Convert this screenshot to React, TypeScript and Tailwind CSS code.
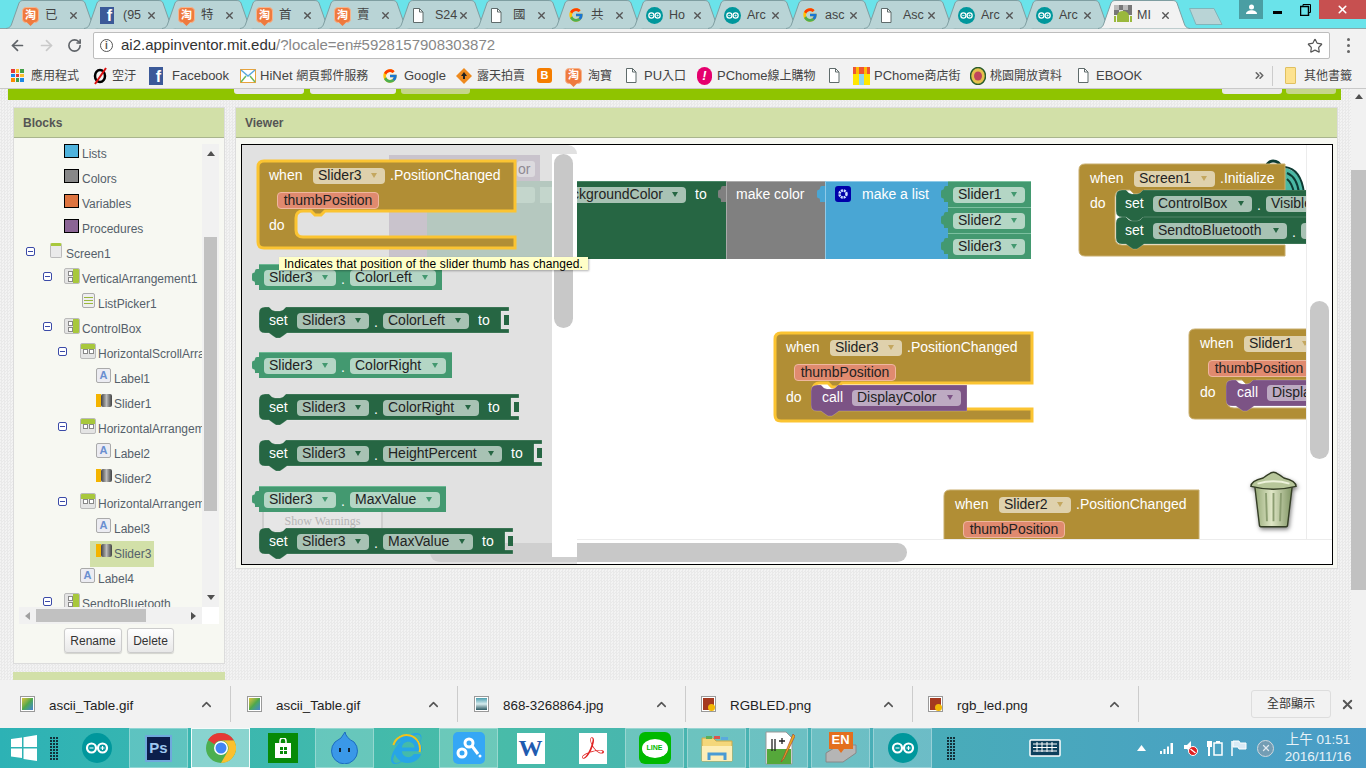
import React from "react";
import { ArrowLeft, ArrowRight, RotateCw, Star, X, ChevronUp, ChevronsRight } from "lucide-react";
import { FcGoogle } from "react-icons/fc";
import { FaInternetExplorer } from "react-icons/fa";
import { SiAdobeacrobatreader } from "react-icons/si";

const Taobao = () => (
  <span className="relative flex h-[16px] w-[17px] items-center justify-center rounded-[4px] border border-[#f6b48c] bg-[#ef7a3e] text-[11px] font-bold leading-none text-white">
    淘
    <span className="absolute -bottom-[3px] left-[5px] h-[5px] w-[5px] rotate-45 bg-[#ef7a3e]" />
  </span>
);
const Fb = ({ s = "h-[18px] w-[14px]" }: { s?: string }) => (
  <span className={`flex items-end justify-end bg-[#3b5998] pr-[2px] text-[16px] font-bold leading-[16px] text-white ${s}`}>f</span>
);
const Doc = () => (
  <svg width="12" height="15" viewBox="0 0 12 15" className="shrink-0">
    <path d="M1.5.5h6l3.5 3.5v10.5h-9.500z" fill="#fff" stroke="#5f6b6b" />
    <path d="M7.500.5v3.500h3.500" fill="none" stroke="#5f6b6b" />
  </svg>
);
const Arduino = ({ size = 17 }: { size?: number }) => (
  <svg width={size} height={size} viewBox="0 0 30 30" className="shrink-0">
    <circle cx="15" cy="15" r="15" fill="#00979c" />
    <circle cx="9.500" cy="15" r="4.500" fill="none" stroke="#fff" strokeWidth="2.200" />
    <circle cx="20.500" cy="15" r="4.500" fill="none" stroke="#fff" strokeWidth="2.200" />
    <path d="M7.500 15h4M18.500 15h4M20.500 13v4" stroke="#fff" strokeWidth="1.200" />
  </svg>
);
const Android = () => (
  <svg width="18" height="20" viewBox="0 0 18 20" className="shrink-0">
    <rect width="18" height="10" fill="#777" />
    <rect x="0" y="0" width="5" height="5" fill="#bbb" />
    <rect x="9" y="0" width="5" height="5" fill="#bbb" />
    <rect x="5" y="5" width="4" height="5" fill="#ddd" />
    <path d="M3 11a6 5 0 0 1 12 0v6H3z" fill="#9ab83d" />
    <rect x="0" y="11" width="2" height="6" fill="#9ab83d" />
    <rect x="16" y="11" width="2" height="6" fill="#9ab83d" />
  </svg>
);

const TAB_ICON: Record<string, React.ReactNode> = {
  t: <Taobao />,
  f: <Fb s="h-[17px] w-[14px]" />,
  d: <Doc />,
  g: <FcGoogle size={16} />,
  a: <Arduino />,
  m: <Android />,
};
const TABS = [
  ["t", "已"], ["f", "(95"], ["t", "特"], ["t", "首"], ["t", "賣"], ["d", "S24"], ["d", "國"], ["g", "共"],
  ["a", "Ho"], ["a", "Arc"], ["g", "asc"], ["d", "Asc"], ["a", "Arc"], ["a", "Arc"], ["m", "MI"],
];

function Tab({ icon, title, active }: { icon: string; title: string; active?: boolean }) {
  return (
    <div className={`relative -mr-[14px] h-[28px] w-[92px] shrink-0 ${active ? "z-10" : ""}`}>
      <svg width="92" height="29" className="absolute left-0 top-0">
        <path
          d="M0 28.500C4 28 5 26 6 23L13 3C14 1 15 .5 18 .5H74C77 .5 78 1 79 3L86 23C87 26 88 28 92 28.500"
          fill={active ? "#f2f2f2" : "#b9d4d6"}
          stroke="#7f9ea1"
        />
      </svg>
      <div className="relative flex h-full items-center pl-[16px] pt-[2px]">
        <span className="flex w-[23px] shrink-0">{TAB_ICON[icon]}</span>
        <span className="w-[23px] whitespace-nowrap text-[12.5px] text-[#444]">{title}</span>
        <X size={11} strokeWidth={3} className="shrink-0 text-[#555]" />
      </div>
    </div>
  );
}

function TabStrip() {
  return (
    <div className="flex h-[28px] shrink-0 bg-[#6ae3ea] pl-[6px]">
      {TABS.map((t, i) => (
        <Tab key={i} icon={t[0]} title={t[1]} active={i === 14} />
      ))}
      <svg width="36" height="20" className="ml-[12px] mt-[7px] shrink-0">
        <path d="M1.500 1.500H26L34 17.500H8z" fill="#b9d4d6" stroke="#7fb5ba" strokeLinejoin="round" />
      </svg>
      <div className="ml-[15px] flex h-[19px] w-[25px] items-center justify-center bg-[#4a9ea3]">
        <svg width="11" height="11" viewBox="0 0 11 11"><circle cx="5.500" cy="3" r="2.500" fill="#fff" /><path d="M0 10c0-5 11-5 11 0z" fill="#fff" /></svg>
      </div>
      <div className="flex h-[19px] w-[29px] items-center justify-center text-black"><div className="mt-[5px] h-[3px] w-[9px] bg-black" /></div>
      <div className="flex h-[19px] w-[28px] items-center justify-center">
        <svg width="11" height="12" viewBox="0 0 11 12"><path d="M3 2.500V.500h7.500v8H8.500" fill="none" stroke="#000" /><rect x=".5" y="2.500" width="8" height="9" fill="none" stroke="#000" strokeWidth="1.500" /></svg>
      </div>
      <div className="flex h-[19px] w-[48px] items-center justify-center bg-[#c75050]"><X size={13} strokeWidth={3} className="text-white" /></div>
    </div>
  );
}

function Toolbar() {
  return (
    <div className="flex h-[34px] shrink-0 items-center border-t border-[#8aa6a8] bg-[#f2f2f2] pl-[9px]">
      <ArrowLeft size={17} strokeWidth={2.4} className="text-[#5f6368]" />
      <ArrowRight size={17} strokeWidth={2.4} className="ml-[12px] text-[#c9c9c9]" />
      <RotateCw size={15} strokeWidth={2.6} className="ml-[12px] text-[#5f6368]" />
      <div className="ml-[11px] flex h-[27px] w-[1237px] items-center rounded-[2px] border border-[#bdbdbd] bg-white pl-[6px] pr-[6px]">
        <span className="flex h-[13px] w-[13px] items-center justify-center rounded-full border-[1.5px] border-[#555] text-[10px] font-bold leading-none text-[#555]">i</span>
        <span className="ml-[8px] text-[15px] text-[#333]">ai2.appinventor.mit.edu<span className="text-[#888]">/?locale=en#5928157908303872</span></span>
        <Star size={16} strokeWidth={1.8} className="ml-auto text-[#555]" />
      </div>
      <div className="ml-[17px] flex flex-col gap-[3px]">
        <span className="h-[3px] w-[3px] rounded-full bg-[#666]" />
        <span className="h-[3px] w-[3px] rounded-full bg-[#666]" />
        <span className="h-[3px] w-[3px] rounded-full bg-[#666]" />
      </div>
    </div>
  );
}

const APP_COLORS = ["bg-[#e53935]", "bg-[#fbc02d]", "bg-[#43a047]", "bg-[#1e88e5]", "bg-[#e53935]", "bg-[#fbc02d]", "bg-[#fb8c00]", "bg-[#43a047]", "bg-[#1e88e5]"];

function BM({ w, icon, children }: { w: string; icon: React.ReactNode; children?: React.ReactNode }) {
  return (
    <div className={`flex shrink-0 items-center ${w}`}>
      <span className="flex shrink-0">{icon}</span>
      <span className="ml-[4px] whitespace-nowrap text-[13px] text-[#444]">{children}</span>
    </div>
  );
}
const Cjk = ({ children }: { children: React.ReactNode }) => <span className="text-[12px]">{children}</span>;

function Bookmarks() {
  return (
    <div className="flex h-[27px] shrink-0 items-center border-b border-[#c9c9c9] bg-[#f2f2f2] pl-[11px] pt-[1px]">
      <BM w="w-[81px]" icon={<span className="mr-[3px] grid h-[13px] w-[13px] grid-cols-3 gap-[1px]">{APP_COLORS.map((c, i) => <span key={i} className={c} />)}</span>}><Cjk>應用程式</Cjk></BM>
      <BM w="w-[57px]" icon={<svg width="16" height="18" viewBox="0 0 16 18"><ellipse cx="8" cy="9" rx="5" ry="6" fill="none" stroke="#000" strokeWidth="2.500" /><path d="M14 1L3 17" stroke="#d11" strokeWidth="2" /></svg>}><Cjk>空汙</Cjk></BM>
      <BM w="w-[91px]" icon={<Fb />}><span className="ml-[5px]">Facebook</span></BM>
      <BM w="w-[142px]" icon={<svg width="16" height="14" viewBox="0 0 16 14"><rect x=".5" y=".5" width="15" height="13" fill="#fff" stroke="#e8a33c" /><path d="M1 1l7 6 7-6" fill="none" stroke="#5aa9dd" strokeWidth="1.500" /><path d="M1 13l5-6M15 13l-5-6" stroke="#6dba5e" strokeWidth="1.500" /></svg>}>HiNet <Cjk>網頁郵件服務</Cjk></BM>
      <BM w="w-[74px]" icon={<FcGoogle size={16} />}><span className="ml-[2px]">Google</span></BM>
      <BM w="w-[81px]" icon={<svg width="16" height="18" viewBox="0 0 16 18"><path d="M8 1l8 8-8 8-8-8z" fill="#ee8a1e" /><path d="M8 5l3 4h-2v3H7V9H5z" fill="#222" /></svg>}><span className="ml-[1px]"><Cjk>露天拍賣</Cjk></span></BM>
      <BM w="w-[28px]" icon={<span className="flex h-[15px] w-[15px] items-center justify-center rounded-[3px] bg-[#f57d00] text-[11px] font-bold text-white">B</span>} />
      <BM w="w-[60px]" icon={<Taobao />}><span className="ml-[2px]"><Cjk>淘寶</Cjk></span></BM>
      <BM w="w-[72px]" icon={<Doc />}><span className="ml-[3px]">PU<Cjk>入口</Cjk></span></BM>
      <BM w="w-[131px]" icon={<span className="flex h-[18px] w-[15px] items-center justify-center rounded-full bg-[#e5006d] text-[13px] font-bold italic leading-none text-white">!</span>}><span className="ml-[1px]">PChome<Cjk>線上購物</Cjk></span></BM>
      <BM w="w-[25px]" icon={<Doc />} />
      <BM w="w-[117px]" icon={<svg width="17" height="18" viewBox="0 0 17 18"><rect width="17" height="7" fill="#e53" /><rect y="7" width="6" height="11" fill="#ffe600" /><rect x="6" y="7" width="5" height="11" fill="#8fd6ee" /><rect x="11" y="7" width="6" height="11" fill="#ffe600" /><rect x="3" width="3" height="7" fill="#fb0" /><rect x="11" width="3" height="7" fill="#fb0" /></svg>}>PChome<Cjk>商店街</Cjk></BM>
      <BM w="w-[107px]" icon={<svg width="16" height="18" viewBox="0 0 16 18"><ellipse cx="8" cy="9" rx="7.500" ry="8.500" fill="#e4c24c" stroke="#2b5e2b" strokeWidth="1.500" /><ellipse cx="8" cy="9" rx="4" ry="4.500" fill="#c0455c" /></svg>}><Cjk>桃園開放資料</Cjk></BM>
      <BM w="w-[176px]" icon={<Doc />}><span className="ml-[3px]">EBOOK</span></BM>
      <ChevronsRight size={13} strokeWidth={3} className="text-[#666]" />
      <div className="ml-[6px] h-[20px] w-px bg-[#ccc]" />
      <span className="ml-[12px] h-[17px] w-[11px] rounded-[1px] border border-[#e0c060] bg-[#fde28f]" />
      <span className="ml-[8px] whitespace-nowrap text-[12px] text-[#444]">其他書籤</span>
    </div>
  );
}

/* tree */
const MinusBox = () => (
  <span className="flex h-[9px] w-[9px] shrink-0 -translate-y-[2px] items-center justify-center rounded-[2px] border border-[#3b4aa8] bg-white">
    <span className="h-px w-[5px] bg-[#3b4aa8]" />
  </span>
);
const Sq = ({ c }: { c: string }) => <span className={`block h-[14px] w-[15px] border border-black ${c}`} />;
const ArrIcon = ({ dir }: { dir: "v" | "h" }) => (
  <span className="relative block h-[16px] w-[16px] rounded-[2px] border border-[#bbb] bg-[#e4e4e4]">
    {dir === "v" && <span className="absolute right-0 top-0 h-full w-[6px] rounded-r-[1px] bg-[#a8c83c]" />}
    {dir === "h" && <span className="absolute left-0 top-0 h-[5px] w-full rounded-t-[1px] bg-[#a8c83c]" />}
    <span className={`absolute h-[5px] w-[5px] border border-[#888] bg-white ${dir === "v" ? "left-[3px] top-[2px]" : "left-[2px] top-[5px]"}`} />
    <span className={`absolute h-[5px] w-[5px] border border-[#888] bg-white ${dir === "v" ? "left-[3px] top-[8px]" : "left-[8px] top-[5px]"}`} />
  </span>
);
const LabelIcon = () => (
  <span className="flex h-[15px] w-[15px] items-center justify-center rounded-[2px] border border-[#aaa] bg-[#ececf2] text-[11px] font-bold leading-none text-[#6a8fd0]">A</span>
);
const SliderIcon = () => (
  <span className="flex h-[13px] w-[16px]">
    <span className="h-full w-[5px] bg-[#f4b400]" />
    <span className="h-full w-[11px] rounded-[2px] bg-gradient-to-r from-[#444] via-[#bbb] to-[#444]" />
  </span>
);
const ListIcon = () => (
  <span className="flex h-[15px] w-[13px] flex-col justify-center gap-[2px] rounded-[2px] border border-[#aaa] bg-[#eee] pl-[1px]">
    <span className="h-px w-[9px] bg-[#9ab83d]" /><span className="h-px w-[9px] bg-[#9ab83d]" /><span className="h-px w-[9px] bg-[#9ab83d]" />
  </span>
);
const ScreenIcon = () => (
  <span className="block h-[15px] w-[12px] rounded-[2px] border border-[#bbb] border-t-[3px] border-t-[#a8c83c] bg-[#eaeaea]" />
);

type Row = { p: string; minus?: boolean; iconM: string; icon: React.ReactNode; text: string; sel?: boolean };
const ROWS: Row[] = [
  { p: "pl-[45px]", iconM: "mr-[3px]", icon: <Sq c="bg-[#4fb3dd]" />, text: "Lists" },
  { p: "pl-[45px]", iconM: "mr-[3px]", icon: <Sq c="bg-[#888888]" />, text: "Colors" },
  { p: "pl-[45px]", iconM: "mr-[3px]", icon: <Sq c="bg-[#de743f]" />, text: "Variables" },
  { p: "pl-[45px]", iconM: "mr-[3px]", icon: <Sq c="bg-[#8b6595]" />, text: "Procedures" },
  { p: "pl-[7px]", minus: true, iconM: "ml-[15px] mr-[4px]", icon: <ScreenIcon />, text: "Screen1" },
  { p: "pl-[24px]", minus: true, iconM: "ml-[12px] mr-[2px]", icon: <ArrIcon dir="v" />, text: "VerticalArrangement1" },
  { p: "pl-[63px]", iconM: "mr-[3px]", icon: <ListIcon />, text: "ListPicker1" },
  { p: "pl-[24px]", minus: true, iconM: "ml-[12px] mr-[2px]", icon: <ArrIcon dir="v" />, text: "ControlBox" },
  { p: "pl-[39px]", minus: true, iconM: "ml-[13px] mr-[2px]", icon: <ArrIcon dir="h" />, text: "HorizontalScrollArrangement1" },
  { p: "pl-[77px]", iconM: "mr-[3px]", icon: <LabelIcon />, text: "Label1" },
  { p: "pl-[77px]", iconM: "mr-[2px]", icon: <SliderIcon />, text: "Slider1" },
  { p: "pl-[39px]", minus: true, iconM: "ml-[13px] mr-[2px]", icon: <ArrIcon dir="h" />, text: "HorizontalArrangement1" },
  { p: "pl-[77px]", iconM: "mr-[3px]", icon: <LabelIcon />, text: "Label2" },
  { p: "pl-[77px]", iconM: "mr-[2px]", icon: <SliderIcon />, text: "Slider2" },
  { p: "pl-[39px]", minus: true, iconM: "ml-[13px] mr-[2px]", icon: <ArrIcon dir="h" />, text: "HorizontalArrangement2" },
  { p: "pl-[77px]", iconM: "mr-[3px]", icon: <LabelIcon />, text: "Label3" },
  { p: "pl-[71px]", iconM: "ml-[6px] mr-[2px]", icon: <SliderIcon />, text: "Slider3", sel: true },
  { p: "pl-[61px]", iconM: "mr-[3px]", icon: <LabelIcon />, text: "Label4" },
  { p: "pl-[24px]", minus: true, iconM: "ml-[12px] mr-[2px]", icon: <ArrIcon dir="v" />, text: "SendtoBluetooth" },
];

function BlocksPanel() {
  return (
    <div className="flex h-[557px] w-[212px] shrink-0 flex-col border border-[#dcdcdc] bg-[#f7f8f2]">
      <div className="flex h-[30px] shrink-0 items-center border-b border-[#a9b58d] bg-[#d2e0a8] pl-[9px] text-[12px] font-bold text-[#555]">Blocks</div>
      <div className="ml-[5px] mt-[6px] flex h-[480px] w-[200px] flex-col">
        <div className="flex h-[463px] w-[200px]">
          <div className="h-full w-[183px] overflow-hidden">
            <div className="-mt-[3px]">
              {ROWS.map((r, i) => (
                <div key={i} className={`flex h-[25px] w-[260px] items-center whitespace-nowrap text-[12px] text-[#55606a] ${r.p}`}>
                  {r.minus && <MinusBox />}
                  {r.sel ? (
                    <div className="flex h-[26px] items-center bg-[#d2e0a8] pr-[3px]">
                      <span className={`flex -translate-y-[3px] ${r.iconM}`}>{r.icon}</span>
                      <span className="pt-[1px]">{r.text}</span>
                    </div>
                  ) : (
                    <>
                      <span className={`flex -translate-y-[3px] ${r.iconM}`}>{r.icon}</span>
                      <span className="pt-[1px]">{r.text}</span>
                    </>
                  )}
                </div>
              ))}
            </div>
          </div>
          <div className="flex h-full w-[17px] flex-col items-center bg-[#f1f1f1]">
            <svg width="8" height="5" className="mt-[7px] shrink-0"><path d="M4 0l4 5H0z" fill="#505050" /></svg>
            <div className="mt-[81px] h-[274px] w-[13px] shrink-0 bg-[#c1c1c1]" />
            <svg width="8" height="5" className="mt-[84px] shrink-0"><path d="M4 5l4-5H0z" fill="#505050" /></svg>
          </div>
        </div>
        <div className="flex h-[17px] w-[200px]">
          <div className="flex h-full w-[183px] items-center bg-[#f1f1f1] pl-[6px]">
            <svg width="5" height="8" className="shrink-0"><path d="M0 4l5-4v8z" fill="#a0a0a0" /></svg>
            <div className="ml-[6px] h-[13px] w-[110px] bg-[#c1c1c1]" />
            <svg width="5" height="8" className="ml-[45px] shrink-0"><path d="M5 4L0 0v8z" fill="#505050" /></svg>
          </div>
          <div className="h-full w-[17px] bg-white" />
        </div>
      </div>
      <div className="mt-[4px] flex gap-[5px] pl-[50px]">
        <button className="h-[25px] w-[58px] rounded-[3px] border border-[#ccc] bg-gradient-to-b from-white to-[#e8e8e8] text-[12px] text-[#333] shadow-[0_1px_1px_rgba(0,0,0,0.15)]">Rename</button>
        <button className="h-[25px] w-[47px] rounded-[3px] border border-[#ccc] bg-gradient-to-b from-white to-[#e8e8e8] text-[12px] text-[#333] shadow-[0_1px_1px_rgba(0,0,0,0.15)]">Delete</button>
      </div>
    </div>
  );
}

/* blockly */
type Tone = "gold" | "dark" | "green" | "purple";
const TONE: Record<Tone, { bg: string; arrow: string }> = {
  gold: { bg: "bg-[#dfd1ac]", arrow: "#c4a75f" },
  dark: { bg: "bg-[#a8c2b4]", arrow: "#266643" },
  green: { bg: "bg-[#b4d6c5]", arrow: "#439970" },
  purple: { bg: "bg-[#bdaac2]", arrow: "#7c5385" },
};
function Pill({ tone, w, children }: { tone: Tone; w: string; children: React.ReactNode }) {
  return (
    <span className={`flex h-4 shrink-0 items-center justify-between overflow-hidden whitespace-nowrap rounded-[4px] pb-[2px] pl-[5px] pr-[8px] text-[14px] leading-none text-[#222] ${TONE[tone].bg} ${w}`}>
      {children}
      <svg width="6" height="5" className="ml-[3px] mt-[1px] shrink-0"><path d="M0 0h6L3 5z" fill={TONE[tone].arrow} /></svg>
    </span>
  );
}
const Dot = () => <span className="w-[14px] shrink-0 pt-[3px] text-center text-[14px] leading-none text-white">.</span>;
const BlockText = ({ children, m = "" }: { children: React.ReactNode; m?: string }) => (
  <span className={`shrink-0 -translate-y-px text-[14px] leading-none text-white ${m}`}>{children}</span>
);

function stmtPath(w: number, h: number, socket: boolean) {
  const right = socket ? `H${w}V4H${w - 8}V${h - 4}H${w}V${h}` : `H${w}V${h}`;
  return `M6 0H10l3 3 3 1h5l3-1 3-3${right}H28l-4 3-3 2h-4l-3-2-4-3H6Q0 ${h} 0 ${h - 6}V6Q0 0 6 0Z`;
}
function Stmt({ pos, w, h = 26, fill, socket, children }: { pos: string; w: number; h?: number; fill: string; socket?: boolean; children: React.ReactNode }) {
  return (
    <div className={`absolute ${pos}`}>
      <svg width={w} height={h + 6} className="absolute left-0 top-0">
        <path d={stmtPath(w, h, !!socket)} fill={fill} stroke="#ffffff33" strokeWidth="1" />
        {socket && <rect x={w - 5} y={8} width={5} height={h - 16} fill={fill} />}
      </svg>
      <div className="relative flex items-center pt-[5px]">{children}</div>
    </div>
  );
}
function SetB({ pos, w, prop, pw }: { pos: string; w: number; prop: string; pw: string }) {
  return (
    <Stmt pos={pos} w={w} fill="#266643" socket>
      <BlockText m="ml-[10px] w-[28px]">set</BlockText>
      <Pill tone="dark" w="w-[72px]">Slider3</Pill>
      <Dot />
      <Pill tone="dark" w={pw}>{prop}</Pill>
      <BlockText m="ml-[9px]">to</BlockText>
    </Stmt>
  );
}
const PuzzleTab = ({ c, cls }: { c: string; cls: string }) => (
  <svg width="8" height="16" className={`absolute ${cls}`}><path d="M8 0H5Q3 0 3 2Q3 4 1 4Q0 4 0 6V10Q0 12 1 12Q3 12 3 14V16H8Z" fill={c} /></svg>
);
function Getter({ pos, prop, pw, w }: { pos: string; prop: string; pw: string; w: string }) {
  return (
    <div className={`absolute flex h-[26px] items-center border-t border-[#6cb893] bg-[#439970] pl-[5px] ${pos} ${w}`}>
      <PuzzleTab c="#439970" cls="-left-[7px] top-[4px]" />
      <Pill tone="green" w="w-[72px]">Slider3</Pill>
      <Dot />
      <Pill tone="green" w={pw}>{prop}</Pill>
    </div>
  );
}
function eventPath(w: number, t: number, l: number, b: number, bottom: number) {
  return `M6 0H${w}V${t}H${l + 29}l-4 4h-6l-4-4H${l + 7}Q${l} ${t} ${l} ${t + 7}V${b - 7}Q${l} ${b} ${l + 7} ${b}H${w}V${bottom}H6Q0 ${bottom} 0 ${bottom - 6}V6Q0 0 6 0Z`;
}
function EventB({ pos, w, t, l, b, bottom, sel, comp, event, doTop, param, children }: {
  pos: string; w: number; t: number; l: number; b: number; bottom: number; sel?: boolean; comp: string; event: string; doTop: string; param?: boolean; children?: React.ReactNode;
}) {
  return (
    <div className={`absolute ${pos}`}>
      <svg width={w + 4} height={bottom + 4} className="absolute left-0 top-0 overflow-visible">
        <path d={eventPath(w, t, l, b, bottom)} fill="#b18e35" stroke={sel ? "#fbc432" : "#c8ad6c"} strokeWidth={sel ? 3 : 1} />
      </svg>
      <div className="absolute left-[11px] top-[7px] flex h-4 items-center whitespace-nowrap">
        <BlockText m="w-[44px]">when</BlockText>
        <Pill tone="gold" w={comp === "Screen1" ? "w-[81px]" : "w-[72px]"}>{comp}</Pill>
        <BlockText m="ml-[5px]">{event}</BlockText>
      </div>
      {param && (
        <span className="absolute left-[19px] top-[31px] flex h-[17px] w-[102px] items-center justify-center rounded-[4px] border border-[#efb79f] bg-[#e08a6f] pb-[2px] text-[14px] leading-none text-[#222]">thumbPosition</span>
      )}
      <BlockText m={`absolute left-[11px] ${doTop}`}>do</BlockText>
      {children}
    </div>
  );
}
function CallB({ pos, w }: { pos: string; w: number }) {
  return (
    <Stmt pos={pos} w={w} fill="#7c5385">
      <BlockText m="ml-[11px] w-[30px]">call</BlockText>
      <Pill tone="purple" w="w-[109px]">DisplayColor</Pill>
    </Stmt>
  );
}

function Trash() {
  return (
    <svg width="47" height="61" viewBox="0 0 50 64" className="absolute left-[1008px] top-[325px] drop-shadow-[1px_2px_2px_rgba(0,0,0,0.5)]">
      <defs>
        <linearGradient id="tg" x1="0" x2="1" y1="0" y2="0">
          <stop offset="0" stopColor="#94a876" />
          <stop offset=".45" stopColor="#dfe6c6" />
          <stop offset="1" stopColor="#7f9463" />
        </linearGradient>
      </defs>
      <path d="M5 16L10 58Q10 60 13 60H37Q40 60 40 58L45 16Z" fill="url(#tg)" stroke="#333d24" strokeWidth="1.500" />
      <path d="M17 24l1 30M25 24v30M33 24l-1 30" stroke="#8c9e72" strokeWidth="2" fill="none" />
      <path d="M1 17Q1 11 14 8Q18 5 20 4Q25 0 30 4Q32 5 36 8Q49 11 49 17Q25 23 1 17Z" fill="#b7c69a" stroke="#333d24" strokeWidth="1.500" />
      <path d="M8 14Q25 9 42 14" fill="none" stroke="#eef3dc" strokeWidth="2" />
    </svg>
  );
}

function MainCanvas() {
  return (
    <div className="absolute left-0 top-0 h-[394px] w-[1064px] overflow-hidden">
      <div className="absolute left-[228px] top-[36px] h-[78px] w-[256px] border-t border-[#4a8768] bg-[#266643]">
        <div className="absolute right-[40px] top-[5px] flex"><Pill tone="dark" w="w-[150px]"><span className="ml-auto mr-[6px]">BackgroundColor</span></Pill></div>
        <BlockText m="absolute left-[225px] top-[6px]">to</BlockText>
        <PuzzleTab c="#808080" cls="right-0 top-[4px]" />
      </div>
      <div className="absolute left-[484px] top-[36px] h-[78px] w-[99px] border-l border-t border-[#aaa] bg-[#808080]">
        <BlockText m="absolute left-[9px] top-[6px]">make color</BlockText>
        <PuzzleTab c="#49a6d4" cls="right-0 top-[4px]" />
      </div>
      <div className="absolute left-[583px] top-[36px] h-[78px] w-[123px] border-l border-t border-[#8fcae8] bg-[#49a6d4]">
        <span className="absolute left-[9px] top-[4px] flex h-4 w-4 items-center justify-center rounded-[3px] bg-[#0000aa]">
          <svg width="12" height="12" viewBox="0 0 12 12"><circle cx="6" cy="6" r="3.500" fill="none" stroke="#cfe0ff" strokeWidth="2.500" strokeDasharray="2 .8" /></svg>
        </span>
        <BlockText m="absolute left-[36px] top-[6px]">make a list</BlockText>
      </div>
      <div className="absolute left-[706px] top-[36px] flex w-[83px] flex-col">
        {["Slider1", "Slider2", "Slider3"].map((s) => (
          <div key={s} className="relative flex h-[26px] items-center border-t border-[#7cc0a0] bg-[#439970] pl-[5px]">
            <PuzzleTab c="#439970" cls="-left-[7px] top-[4px]" />
            <Pill tone="green" w="w-[72px]">{s}</Pill>
          </div>
        ))}
      </div>

      <svg width="44" height="34" viewBox="0 0 44 34" className="absolute left-[1021px] top-[14px]">
        <path d="M2 12Q4 2 10 2Q16 2 18 8" fill="none" stroke="#0d3b33" strokeWidth="3" />
        <path d="M22 9Q38 12 41 34H22z" fill="#4ab8a4" />
        <path d="M22 8Q38 10 41 34M24 14Q34 18 36 34M24 20Q29 24 31 34" fill="none" stroke="#0d3b33" strokeWidth="2" />
      </svg>

      <EventB pos="left-[837px] top-[19px]" w={206} t={26} l={36} b={81} bottom={92} comp="Screen1" event=".Initialize" doTop="top-[33px]" />
      <Stmt pos="left-[874px] top-[45px]" w={200} h={27} fill="#266643">
        <BlockText m="ml-[9px] w-[28px]">set</BlockText>
        <Pill tone="dark" w="w-[99px]">ControlBox</Pill>
        <Dot />
        <Pill tone="dark" w="w-[60px]">Visible</Pill>
      </Stmt>
      <Stmt pos="left-[874px] top-[72px]" w={200} h={27} fill="#266643">
        <BlockText m="ml-[9px] w-[28px]">set</BlockText>
        <Pill tone="dark" w="w-[134px]">SendtoBluetooth</Pill>
        <Dot />
        <Pill tone="dark" w="w-[60px]">{""}</Pill>
      </Stmt>

      <EventB pos="left-[533px] top-[188px]" w={257} t={50} l={38} b={76} bottom={88} sel comp="Slider3" event=".PositionChanged" doTop="top-[58px]" param>
        <CallB pos="left-[36px] top-[52px]" w={156} />
      </EventB>

      <EventB pos="left-[947px] top-[184px]" w={200} t={51} l={38} b={79} bottom={90} comp="Slider1" event=".PositionChanged" doTop="top-[57px]" param>
        <CallB pos="left-[37px] top-[51px]" w={140} />
      </EventB>

      <EventB pos="left-[702px] top-[345px]" w={255} t={52} l={38} b={80} bottom={92} comp="Slider2" event=".PositionChanged" doTop="top-[58px]" param />
    </div>
  );
}

function Flyout() {
  return (
    <div className="absolute left-0 top-0 h-[419px] w-[335px] rounded-tr-[9px] bg-[#e1e1e1]">
      <div className="absolute left-[147px] top-[10px] h-[26px] w-[151px] bg-[#c9c3cc]" />
      <div className="absolute left-[147px] top-[36px] h-[77px] w-[38px] bg-[#c9c3cc]" />
      <div className="absolute left-[185px] top-[36px] h-[77px] w-[125px] bg-[#b5c8bf]" />
      <span className="absolute left-[275px] top-[16px] flex h-[16px] w-[18px] items-center rounded-[3px] bg-[#dcdade] pl-[1px] text-[14px] leading-none text-[#8f8a92]">or</span>
      <span className="absolute left-[240px] top-[42px] h-[16px] w-[53px] rounded-[3px] bg-[#c4d6cc]" />
      <span className="absolute left-[298px] top-[42px] h-[16px] w-[12px] bg-[#c4d6cc]" />

      <div className="absolute left-[188px] top-[398px] h-[19px] w-[147px] rounded-l-[10px] bg-[#cfcfcf]" />

      <div className="absolute left-[310px] top-[9px] h-[403px] w-[25px] bg-white">
        <div className="ml-[2px] h-[174px] w-[19px] rounded-[10px] bg-[#c8c8c8]" />
      </div>

      <EventB pos="left-[16px] top-[16px]" w={257} t={50} l={38} b={76} bottom={87} sel comp="Slider3" event=".PositionChanged" doTop="top-[58px]" param />

      <Getter pos="left-[17px] top-[119px]" prop="ColorLeft" pw="w-[86px]" w="w-[183px]" />
      <SetB pos="left-[17px] top-[162px]" w={250} prop="ColorLeft" pw="w-[86px]" />
      <Getter pos="left-[17px] top-[207px]" prop="ColorRight" pw="w-[96px]" w="w-[193px]" />
      <SetB pos="left-[17px] top-[249px]" w={260} prop="ColorRight" pw="w-[96px]" />
      <SetB pos="left-[17px] top-[295px]" w={283} prop="HeightPercent" pw="w-[119px]" />
      <Getter pos="left-[17px] top-[341px]" prop="MaxValue" pw="w-[90px]" w="w-[187px]" />
      <div className="absolute left-[20px] top-[367px] flex h-[18px] w-[121px] items-center justify-center border-x-2 border-[#cfcfcf] bg-[#e6e6e6] [font-family:'Liberation_Serif',serif] text-[12px] text-[#b5b5b5]">Show Warnings</div>
      <SetB pos="left-[17px] top-[383px]" w={254} prop="MaxValue" pw="w-[90px]" />

      <div className="absolute left-[37px] top-[112px] z-20 flex h-[13px] w-[309px] items-center justify-center whitespace-nowrap bg-[#ffffc8] text-[12px] leading-none tracking-[0.1px] text-black shadow-[1px_1px_2px_rgba(0,0,0,0.3)]">Indicates that position of the slider thumb has changed.</div>
    </div>
  );
}

function Workspace() {
  return (
    <div className="relative ml-[5px] mt-[6px] h-[421px] w-[1092px] overflow-hidden border border-black bg-white">
      <MainCanvas />
      <div className="absolute left-0 top-[394px] h-px w-[1090px] bg-[#ececec]" />
      <div className="absolute left-[1064px] top-0 h-[394px] w-px bg-[#ececec]" />
      <Flyout />
      <Trash />
      <div className="absolute left-[1068px] top-[156px] h-[158px] w-[19px] rounded-[10px] bg-[#c8c8c8]" />
      <div className="absolute left-[335px] top-[398px] h-[19px] w-[330px] rounded-r-[10px] bg-[#c8c8c8]" />
    </div>
  );
}

function Viewer() {
  return (
    <div className="ml-[10px] flex h-[462px] w-[1103px] shrink-0 flex-col border border-[#dcdcdc] bg-[#f7f8f2]">
      <div className="flex h-[30px] shrink-0 items-center border-b border-[#a9b58d] bg-[#d2e0a8] pl-[9px] text-[12px] font-bold text-[#555]">Viewer</div>
      <Workspace />
    </div>
  );
}

function Page() {
  return (
    <div className="flex h-[591px] shrink-0">
      <div className="h-full w-[1351px] overflow-hidden bg-[repeating-conic-gradient(#e9e9e9_0_25%,#f3f3f3_0_50%)] bg-[length:3px_3px]">
        <div className="ml-[8px] flex h-[11px] w-[1333px] items-start bg-[#8fc400]">
          <span className="ml-[226px] h-[5px] w-[70px] rounded-b-[3px] bg-[#e9e9e9]" />
          <span className="ml-[6px] h-[5px] w-[86px] rounded-b-[3px] bg-[#e9e9e9]" />
          <span className="ml-[5px] h-[5px] w-[69px] rounded-b-[3px] bg-[#c5d68a]" />
          <span className="ml-[752px] h-[5px] w-[60px] rounded-b-[3px] bg-[#e9e9e9]" />
          <span className="ml-[4px] h-[5px] w-[50px] rounded-b-[3px] bg-[#c5d68a]" />
        </div>
        <div className="ml-[13px] mt-[7px] flex items-start">
          <BlocksPanel />
          <Viewer />
        </div>
        <div className="ml-[13px] mt-[8px] h-[8px] w-[212px] bg-[#d2e0a8]" />
      </div>
      <div className="flex h-full w-[15px] flex-col items-center bg-[#f1f1f1]">
        <svg width="8" height="5" className="mt-[5px] shrink-0"><path d="M4 0l4 5H0z" fill="#505050" /></svg>
        <div className="mt-[71px] h-[420px] w-full shrink-0 bg-[#c1c1c1]" />
      </div>
    </div>
  );
}

const ImgIcon = ({ kind }: { kind: "g" | "j" | "p" }) => (
  <span className="relative block h-[16px] w-[15px] shrink-0 border border-[#999] bg-white p-px">
    {kind === "g" && <span className="block h-full w-full bg-gradient-to-br from-[#d8c23e] via-[#4fa84a] to-[#4a7fd0]" />}
    {kind === "j" && <span className="block h-full w-full bg-gradient-to-b from-[#4a9fb0] via-[#d6ecee] to-[#2c5a63]" />}
    {kind === "p" && (
      <>
        <span className="block h-full w-full bg-[#a5391f]" />
        <span className="absolute bottom-0 right-0 h-[7px] w-[7px] rounded-full bg-[#f2b705]" />
      </>
    )}
  </span>
);
function DL({ kind, name, w, pl }: { kind: "g" | "j" | "p"; name: string; w: string; pl: string }) {
  return (
    <div className={`flex h-[36px] items-center border-r border-[#ccc] ${w} ${pl}`}>
      <ImgIcon kind={kind} />
      <span className="ml-[14px] translate-y-[2px] text-[13.4px] text-[#222]">{name}</span>
      <ChevronUp size={15} strokeWidth={2.500} className="ml-auto mr-[16px] text-[#555]" />
    </div>
  );
}
function Downloads() {
  return (
    <div className="flex h-[48px] shrink-0 items-center bg-[#f2f2f2]">
      <DL kind="g" name="ascii_Table.gif" w="w-[231px]" pl="pl-[20px]" />
      <DL kind="g" name="ascii_Table.gif" w="w-[227px]" pl="pl-[16px]" />
      <DL kind="j" name="868-3268864.jpg" w="w-[228px]" pl="pl-[16px]" />
      <DL kind="p" name="RGBLED.png" w="w-[227px]" pl="pl-[15px]" />
      <DL kind="p" name="rgb_led.png" w="w-[226px]" pl="pl-[15px]" />
      <button className="ml-[112px] h-[28px] w-[80px] rounded-[3px] border border-[#ddd] bg-[#f2f2f2] text-[12px] text-[#333]">全部顯示</button>
      <X size={15} strokeWidth={3} className="ml-[9px] text-[#555]" />
    </div>
  );
}

const Dots = () => (
  <span className="grid w-[8px] shrink-0 grid-cols-3 gap-x-px gap-y-[1px]">
    {Array.from({ length: 24 }).map((_, i) => <span key={i} className="h-[2px] w-[2px] bg-[#12313a]" />)}
  </span>
);
function Slot({ box, on, children }: { box?: boolean; on?: boolean; children: React.ReactNode }) {
  return (
    <div className={`mr-[3px] flex h-[40px] w-[59px] shrink-0 items-center justify-center ${box ? "border border-white/30 bg-white/20" : ""} ${on ? "border-white/90 bg-white/40" : ""}`}>
      {children}
    </div>
  );
}
function Taskbar() {
  return (
    <div className="flex h-[40px] shrink-0 items-center bg-gradient-to-r from-[#2db2b5] via-[#48bca8] via-35% to-[#4a9cc7] text-white">
      <div className="flex w-[67px] shrink-0 items-center pl-[11px]">
        <svg width="26" height="26" viewBox="0 0 26 26"><path d="M0 4l11-1.500V12H0zM12.500 2.300L26 0v12H12.500zM0 13.500h11V23L0 21.500zM12.500 13.500H26V26l-13.500-2z" fill="#fff" /></svg>
        <span className="ml-[13px]"><Dots /></span>
      </div>
      <Slot><Arduino size={30} /></Slot>
      <Slot box><span className="flex h-[27px] w-[27px] items-center justify-center border-2 border-[#6fa8dc] bg-[#0b1e4b] text-[15px] font-bold text-[#9fc8f0]">Ps</span></Slot>
      <Slot box on>
        <svg width="30" height="30" viewBox="0 0 30 30">
          <circle cx="15" cy="15" r="15" fill="#4caf50" />
          <path d="M15 0a15 15 0 0 1 13 7.500H15a7.500 7.500 0 0 0-6.500 3.750L2 7A15 15 0 0 1 15 0z" fill="#e53935" />
          <path d="M28 7.500A15 15 0 0 1 15 30l6.500-11.250A7.500 7.500 0 0 0 15 7.500z" fill="#fbc02d" />
          <circle cx="15" cy="15" r="7" fill="#fff" /><circle cx="15" cy="15" r="5.500" fill="#4285f4" />
        </svg>
      </Slot>
      <Slot>
        <span className="flex h-[30px] w-[30px] items-center justify-center bg-[#078a07]">
          <svg width="18" height="20" viewBox="0 0 18 20"><path d="M6 5V3a3 3 0 0 1 6 0v2" fill="none" stroke="#fff" strokeWidth="1.500" /><path d="M1 5h16v15H1z" fill="#fff" /><path d="M6 9h3v3H6zM10 9h3v3h-3zM6 13h3v3H6zM10 13h3v3h-3z" fill="#078a07" /></svg>
        </span>
      </Slot>
      <Slot box>
        <svg width="30" height="32" viewBox="0 0 30 32"><path d="M15 0Q16 6 24 10a13 13 0 1 1-19 0Q12 7 15 0z" fill="#3a98e8" stroke="#1c6cc0" /><path d="M10 16v4M19 16v4" stroke="#123" strokeWidth="2" /></svg>
      </Slot>
      <Slot>
        <span className="relative flex"><FaInternetExplorer size={31} className="text-[#27a5e6]" /><span className="absolute left-[1px] top-[1px] h-[29px] w-[29px] rotate-[-30deg] rounded-[50%] border-[2px] border-transparent border-r-[#f2c31b] border-t-[#f2c31b]" /></span>
      </Slot>
      <Slot box>
        <span className="flex h-[32px] w-[32px] items-center justify-center rounded-[5px] bg-[#35a7f5]">
          <svg width="26" height="22" viewBox="0 0 26 22"><circle cx="13" cy="6" r="4" fill="none" stroke="#fff" strokeWidth="3" /><circle cx="6" cy="16" r="4" fill="none" stroke="#fff" strokeWidth="3" /><path d="M16 9l6 8" stroke="#fff" strokeWidth="3" /><circle cx="24" cy="19" r="1.500" fill="#fff" /></svg>
        </span>
      </Slot>
      <Slot>
        <span className="flex h-[31px] w-[28px] items-center justify-center bg-white text-[24px] font-bold leading-none text-[#1f5bb0] [font-family:'Liberation_Serif',serif]">W</span>
      </Slot>
      <Slot>
        <span className="flex h-[31px] w-[28px] items-center justify-center bg-white"><SiAdobeacrobatreader size={22} className="text-[#e02020]" /></span>
      </Slot>
      <Slot box>
        <span className="flex h-[32px] w-[32px] items-center justify-center rounded-[6px] bg-[#00b900]">
          <span className="flex h-[19px] w-[26px] items-center justify-center rounded-[50%] bg-white text-[7px] font-bold text-[#00b900]">LINE</span>
        </span>
      </Slot>
      <Slot box>
        <svg width="32" height="32" viewBox="0 0 32 32"><path d="M1 6h11l3 3h16v20H1z" fill="#f4d77a" stroke="#caa84a" /><rect x="5" y="4" width="6" height="3" fill="#5bb05b" /><rect x="13" y="4" width="6" height="3" fill="#d9534f" /><rect x="20" y="5" width="7" height="3" fill="#5aa9dd" /><path d="M1 14h30v15H1z" fill="#fdeeb8" /><path d="M8 28v-6h16v6" fill="none" stroke="#4a9bd4" strokeWidth="3" /></svg>
      </Slot>
      <Slot box>
        <svg width="32" height="34" viewBox="0 0 32 34"><path d="M3 1h20l6 6v26H3z" fill="#fff" stroke="#999" /><path d="M4 18h24v15H4z" fill="#55a83a" /><path d="M9 8v12M12 8v12M16 10h6M19 7v6" stroke="#222" strokeWidth="1.300" /><path d="M30 3L20 27l-2 4 3-3L32 5z" fill="#e8b020" stroke="#a33" strokeWidth=".6" /></svg>
      </Slot>
      <Slot box>
        <span className="relative block h-[34px] w-[32px]">
          <svg width="32" height="34" viewBox="0 0 32 34" className="absolute left-0 top-0"><path d="M1 22L14 14h17v8L18 31H1z" fill="#b5b5b5" stroke="#888" /><path d="M4 1h24v17h-9l-3 4-3-4H4z" fill="#e36f1e" /></svg>
          <span className="absolute left-[7px] top-[2px] text-[13px] font-bold leading-none text-white">EN</span>
        </span>
      </Slot>
      <Slot box><Arduino size={30} /></Slot>
      <div className="ml-[12px]"><Dots /></div>
      <svg width="32" height="18" viewBox="0 0 32 18" className="ml-[74px] shrink-0"><rect x="1" y="1" width="30" height="16" rx="1" fill="#0d3f5c" stroke="#fff" strokeWidth="1.500" /><path d="M4 5h24M4 8.500h24M4 12h24M8 3v10M13 3v10M18 3v10M23 3v10" stroke="#fff" strokeWidth="1" /></svg>
      <svg width="9" height="6" className="ml-[76px] shrink-0"><path d="M4.500 0L9 6H0z" fill="#fff" /></svg>
      <svg width="16" height="14" viewBox="0 0 16 14" className="ml-[13px] shrink-0"><path d="M1 10h2v3H1zM4.500 8h2v5h-2zM8 5.500h2V13H8zM11.500 2h2.500v11h-2.500z" fill="#fff" /></svg>
      <svg width="15" height="18" viewBox="0 0 15 18" className="ml-[8px] shrink-0"><path d="M1 6h3l4-4v12L4 10H1z" fill="#fff" /><circle cx="10" cy="12" r="4.500" fill="#e02020" stroke="#fff" /><path d="M7.500 10l5 4" stroke="#fff" strokeWidth="1.300" /></svg>
      <svg width="16" height="16" viewBox="0 0 16 16" className="ml-[9px] shrink-0"><path d="M1 4h2v12H1zM0 1h5v6H0z" fill="#fff" /><rect x="7" y="3" width="8" height="12" fill="none" stroke="#fff" strokeWidth="1.500" /><rect x="9" y="1" width="4" height="2" fill="#fff" /></svg>
      <svg width="16" height="16" viewBox="0 0 16 16" className="ml-[8px] shrink-0"><path d="M1 1v15" stroke="#fff" strokeWidth="1.500" /><path d="M2 1h6l1 2h6v6H8L7 7H2z" fill="#d8eaf5" stroke="#fff" /></svg>
      <span className="ml-[10px] flex h-[17px] w-[17px] shrink-0 items-center justify-center rounded-full border border-[#d0d8de] bg-[#7e9cb0]/80"><X size={10} strokeWidth={3} className="text-[#dfe8ee]" /></span>
      <div className="ml-[9px] flex w-[70px] shrink-0 flex-col items-center gap-[1px] text-[13.5px] leading-[16px] text-[#e8f3f8]">
        <span>上午 01:51</span>
        <span>2016/11/16</span>
      </div>
    </div>
  );
}

export default function App() {
  return (
    <div className="flex h-[768px] w-[1366px] flex-col overflow-hidden bg-white [font-family:'Liberation_Sans','Noto_Sans_CJK_TC',sans-serif]">
      <TabStrip />
      <Toolbar />
      <Bookmarks />
      <Page />
      <Downloads />
      <Taskbar />
    </div>
  );
}
